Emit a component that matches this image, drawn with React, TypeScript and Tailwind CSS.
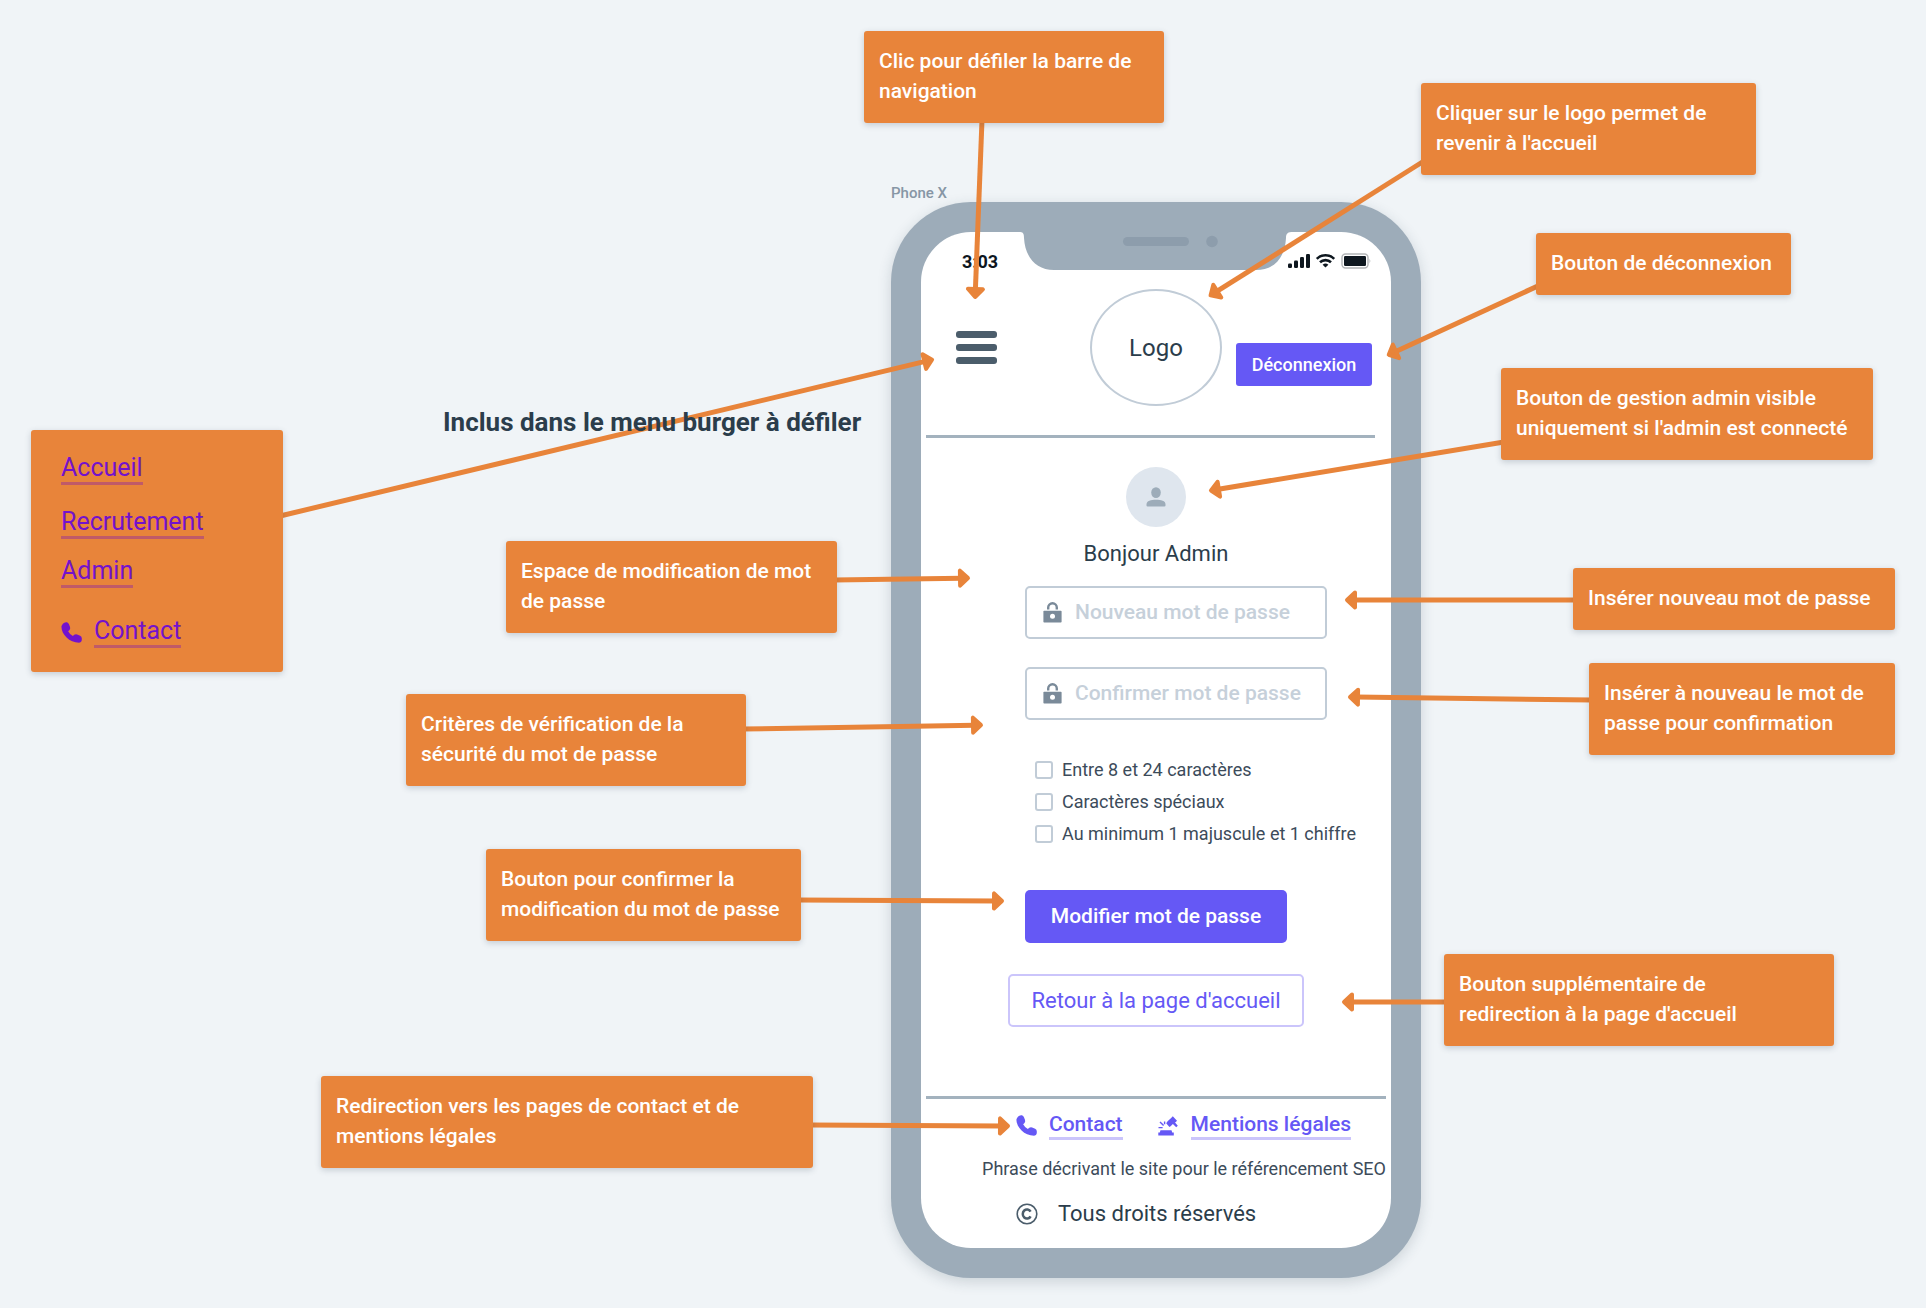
type Point = [number, number];

const notes: { text: string; place: string }[] = [
  { text: "Clic pour défiler la barre de navigation", place: "left-[864px] top-[31px] w-[300px]" },
  { text: "Cliquer sur le logo permet de revenir à l'accueil", place: "left-[1421px] top-[83px] w-[335px]" },
  { text: "Bouton de déconnexion", place: "left-[1536px] top-[233px] w-[255px]" },
  { text: "Bouton de gestion admin visible uniquement si l'admin est connecté", place: "left-[1501px] top-[368px] w-[372px]" },
  { text: "Insérer nouveau mot de passe", place: "left-[1573px] top-[568px] w-[322px]" },
  { text: "Insérer à nouveau le mot de passe pour confirmation", place: "left-[1589px] top-[663px] w-[306px]" },
  { text: "Bouton supplémentaire de\nredirection à la page d'accueil", place: "left-[1444px] top-[954px] w-[390px]" },
  { text: "Espace de modification de mot de passe", place: "left-[506px] top-[541px] w-[331px]" },
  { text: "Critères de vérification de la sécurité du mot de passe", place: "left-[406px] top-[694px] w-[340px]" },
  { text: "Bouton pour confirmer la modification du mot de passe", place: "left-[486px] top-[849px] w-[315px]" },
  { text: "Redirection vers les pages de contact et de mentions légales", place: "left-[321px] top-[1076px] w-[492px]" },
];

const arrows: { from: Point; to: Point }[] = [
  { from: [982, 120], to: [975, 300] },
  { from: [1424, 161], to: [1208, 297] },
  { from: [1540, 285], to: [1386, 356] },
  { from: [1504, 442], to: [1208, 491] },
  { from: [1576, 600], to: [1344, 600] },
  { from: [1592, 700], to: [1347, 697] },
  { from: [1448, 1002], to: [1341, 1002] },
  { from: [834, 580], to: [971, 578] },
  { from: [742, 729], to: [984, 725] },
  { from: [798, 900], to: [1005, 901] },
  { from: [810, 1125], to: [1011, 1126] },
  { from: [280, 516], to: [935, 359] },
];

function Arrow({ from, to }: { from: Point; to: Point }) {
  const dx = to[0] - from[0];
  const dy = to[1] - from[1];
  const length = Math.hypot(dx, dy);
  const angle = (Math.atan2(dy, dx) * 180) / Math.PI;
  return (
    <g transform={`translate(${to[0]} ${to[1]}) rotate(${angle})`}>
      <line x1={-length} y1="0" x2="-9" y2="0" strokeWidth="5" />
      <path d="M-3 0L-11 -7.5V7.5Z" fill="#e8843a" strokeWidth="4" strokeLinejoin="round" />
    </g>
  );
}

function Note({ text, place }: { text: string; place: string }) {
  return (
    <p
      className={`absolute rounded-[3px] bg-[#e8843a] px-[15px] pt-[15px] pb-[17px] text-[21px] leading-[30px] font-medium whitespace-pre-line text-white shadow-[0_2px_6px_rgba(40,60,80,0.22)] ${place}`}
    >
      {text}
    </p>
  );
}

function CallIcon({ className }: { className: string }) {
  return (
    <svg className={className} width="21" height="21" viewBox="0 0 20 20" fill="currentColor" aria-hidden="true">
      <path d="M1.200 2.600C2 0.800 4 0 5.600 0.300Q7 0.600 7.600 2.200L8.600 4.800Q9.200 6.600 7.900 7.800L6.800 8.800Q8.400 11.800 11.300 13.400L12.600 12.200Q13.800 11.200 15.400 11.800L18.200 13Q19.800 13.800 19.800 15.400V17.400Q19.600 19.600 17.200 19.800C8 19.800 0.400 12 0.400 4.400Q0.500 3.400 1.200 2.600Z" />
    </svg>
  );
}

function MenuLink({ children }: { children: string }) {
  return (
    <a href="#" className="block border-b-[3px] border-[#c05a68] text-[25px] leading-7 text-[#7312cc]">
      {children}
    </a>
  );
}

function MenuCard() {
  return (
    <nav className="absolute top-[430px] left-[31px] flex w-[252px] flex-col items-start rounded-[3px] bg-[#e8843a] px-[30px] py-6 shadow-[0_2px_6px_rgba(40,60,80,0.22)]">
      <MenuLink>Accueil</MenuLink>
      <div className="mt-[23px]">
        <MenuLink>Recrutement</MenuLink>
      </div>
      <div className="mt-[18px]">
        <MenuLink>Admin</MenuLink>
      </div>
      <div className="mt-[29px] flex items-center gap-3">
        <CallIcon className="text-[#7312cc]" />
        <MenuLink>Contact</MenuLink>
      </div>
    </nav>
  );
}

function Notch() {
  return (
    <svg className="absolute -top-px left-1/2 -translate-x-1/2" width="274" height="40" viewBox="0 0 274 40" aria-hidden="true">
      <path d="M0 0H274V1C269 1 267 2 267 7C266 26 256 39 237 39H35C17 39 6 26 5 7C5 2 4 1 0 1Z" fill="#9dacb9" />
      <rect x="104" y="6" width="66" height="9" rx="4.5" fill="#8d9dac" />
      <circle cx="193" cy="10.500" r="5.800" fill="#8d9dac" />
    </svg>
  );
}

function StatusIcons() {
  return (
    <svg width="84" height="18" viewBox="0 0 84 18" fill="#0e171f" aria-hidden="true">
      <rect x="0" y="10.500" width="4" height="4.500" rx="1.200" />
      <rect x="6" y="7.500" width="4" height="7.500" rx="1.200" />
      <rect x="12" y="4" width="4" height="11" rx="1.200" />
      <rect x="18" y="1" width="4" height="14" rx="1.200" />
      <g fill="none" stroke="#0e171f" strokeWidth="2.600">
        <path d="M28.800 5.800C33.500 1 41.500 1 46.200 5.800" />
        <path d="M32 9.300C35 6.400 40 6.400 43 9.300" />
      </g>
      <path d="M34.600 11.700Q37.500 9.500 40.400 11.700L37.500 14.600Z" />
      <rect x="54" y="1" width="26" height="14" rx="3.500" fill="none" stroke="#b3b5b7" strokeWidth="1.400" />
      <rect x="56" y="3" width="22" height="10" rx="1.200" />
      <path d="M81.500 5.500Q83.300 8 81.500 10.500Z" fill="#b3b5b7" />
    </svg>
  );
}

function PersonIcon() {
  return (
    <svg width="20" height="20" viewBox="0 0 20 20" fill="#9dacb9" aria-hidden="true">
      <ellipse cx="10" cy="5.600" rx="4.800" ry="5.400" />
      <path d="M0.500 17.500C0.500 13.500 5 12.700 10 12.700S19.500 13.500 19.500 17.500V18.500Q19.500 19.600 18.400 19.600H1.600Q0.500 19.600 0.500 18.500Z" />
    </svg>
  );
}

function LockIcon() {
  return (
    <svg className="shrink-0" width="19" height="21" viewBox="0 0 19 21" aria-hidden="true">
      <path d="M5.200 7.500V5.600A4.300 4.400 0 0 1 13.800 5.600V7.500" fill="none" stroke="#7a8a99" strokeWidth="2.400" />
      <path d="M1.200 8.800H17.800Q18.600 8.800 18.600 9.600V19.800Q18.600 20.600 17.800 20.600H1.200Q0.400 20.600 0.400 19.800V9.600Q0.400 8.800 1.200 8.800Z" fill="#7a8a99" />
      <circle cx="9.500" cy="14.200" r="2.500" fill="#fff" />
    </svg>
  );
}

function GavelIcon() {
  return (
    <svg width="20" height="20" viewBox="0 0 20 20" fill="#6558f5" aria-hidden="true">
      <path d="M2.500 14.200H13.500L14.200 16.600H15.800V19.600H0.300V16.600H1.800Z" />
      <path d="M0.500 11.600H4.600M2 6L5.600 9.600M6.600 5.600V8.200" stroke="#6558f5" strokeWidth="1.400" fill="none" />
      <path d="M8.200 7.200L9.600 5.200L13.400 1.800L14.800 0.300L19 4.800L17.600 6.200L16.800 6.200L19.800 9.800L18.200 11.200L14.900 8L12.600 10.200L11.400 11Z" />
    </svg>
  );
}

function CopyrightIcon() {
  return (
    <svg width="22" height="22" viewBox="0 0 22 22" fill="none" stroke="#4b5d6b" aria-hidden="true">
      <circle cx="11" cy="11" r="9.800" strokeWidth="1.600" />
      <path d="M14.600 8.700A4.200 4.600 0 1 0 14.600 13.300" strokeWidth="2.500" />
    </svg>
  );
}

function PasswordField({ label }: { label: string }) {
  return (
    <label className="flex h-[53px] w-[302px] items-center gap-[13px] rounded-[5px] border-2 border-[#c1ccd7] px-4">
      <LockIcon />
      <input
        type="password"
        aria-label={label}
        placeholder={label}
        className="min-w-0 flex-1 bg-transparent text-[21px] font-medium text-[#2b3d4b] outline-none placeholder:text-[#c6d0da]"
      />
    </label>
  );
}

function Criterion({ label }: { label: string }) {
  return (
    <label className="flex h-8 items-center gap-[9px] text-lg whitespace-nowrap text-[#3c4b5a]">
      <input type="checkbox" className="size-[18px] appearance-none rounded-[3px] border-2 border-[#c1ccd7] bg-white checked:bg-[#6558f5]" />
      {label}
    </label>
  );
}

function FooterLink({ children }: { children: string }) {
  return (
    <a href="#" className="border-b-[3px] border-[#cbc5fb] text-[21px] leading-[26px] text-[#6558f5]">
      {children}
    </a>
  );
}

function Phone() {
  return (
    <section
      aria-label="Phone X"
      className="absolute top-[202px] left-[891px] w-[530px] rounded-[80px] bg-[#9dacb9] p-[30px] shadow-[0_4px_14px_rgba(40,60,80,0.18)]"
    >
      <div className="relative flex flex-col overflow-hidden rounded-[50px] bg-white pb-[19px]">
        <Notch />
        <div className="flex items-center justify-between pt-4 pr-[19px] pl-[41px] leading-7">
          <span className="text-lg leading-[27px] font-bold text-[#0e171f]">3:03</span>
          <StatusIcons />
        </div>

        <header className="mt-[14px] grid grid-cols-[1fr_auto_1fr] items-center pr-[19px] pl-[35px]">
          <button type="button" aria-label="Menu" className="flex w-[41px] flex-col gap-[6px]">
            <span className="h-[7px] rounded-[3px] bg-[#4b5d6b]" />
            <span className="h-[7px] rounded-[3px] bg-[#4b5d6b]" />
            <span className="h-[7px] rounded-[3px] bg-[#4b5d6b]" />
          </button>
          <a
            href="#"
            className="-ml-4 flex h-[117px] w-[132px] items-center justify-center rounded-[50%] border-2 border-[#c1ccd7] text-2xl text-[#2b3d4b]"
          >
            Logo
          </a>
          <button type="button" className="mb-5 h-[43px] w-[136px] self-end justify-self-end rounded-[3px] bg-[#6558f5] text-lg font-medium text-white">
            Déconnexion
          </button>
        </header>

        <hr className="mt-[29px] mr-4 ml-[5px] border-t-[3px] border-[#a3b2be]" />

        <main className="flex flex-col">
          <div className="mt-[29px] flex size-[60px] items-center justify-center self-center rounded-full bg-[#dfe6ee]">
            <PersonIcon />
          </div>
          <h1 className="mt-3 self-center text-[22px] leading-[30px] text-[#2b3d4b]">Bonjour Admin</h1>

          <form className="mt-[17px] flex flex-col items-start pl-[104px]">
            <PasswordField label="Nouveau mot de passe" />
            <div className="mt-7">
              <PasswordField label="Confirmer mot de passe" />
            </div>
            <div className="mt-[34px] pl-[10px]">
              <Criterion label="Entre 8 et 24 caractères" />
              <Criterion label="Caractères spéciaux" />
              <Criterion label="Au minimum 1 majuscule et 1 chiffre" />
            </div>
            <button type="button" className="mt-10 h-[53px] w-[262px] rounded-[5px] bg-[#6558f5] text-[21px] font-medium text-white">
              Modifier mot de passe
            </button>
          </form>
          <button
            type="button"
            className="mt-[31px] h-[53px] w-[296px] self-center rounded-[5px] border-2 border-[#cbc5fb] bg-white text-[22px] text-[#6558f5]"
          >
            Retour à la page d'accueil
          </button>
        </main>

        <hr className="mt-[69px] mr-[5px] ml-[5px] border-t-[3px] border-[#a3b2be]" />

        <footer className="flex flex-col pr-[5px]">
          <div className="mt-3 flex items-center gap-3 pl-[95px] font-medium">
            <CallIcon className="text-[#6558f5]" />
            <FooterLink>Contact</FooterLink>
            <div className="ml-[23px] flex items-center gap-[13px]">
              <GavelIcon />
              <FooterLink>Mentions légales</FooterLink>
            </div>
          </div>
          <p className="mt-[18px] self-end text-lg leading-[22px] whitespace-nowrap text-[#3c4b5a]">
            Phrase décrivant le site pour le référencement SEO
          </p>
          <p className="mt-[19px] flex items-center gap-5 pl-[95px] text-[22px] leading-[30px] text-[#2b3d4b]">
            <CopyrightIcon />
            Tous droits réservés
          </p>
        </footer>
      </div>
    </section>
  );
}

export default function App() {
  return (
    <div className="relative min-h-screen w-full overflow-hidden bg-[#f0f4f7] font-['Roboto',sans-serif]">
      <span className="absolute top-[183px] left-[891px] text-[15px] leading-5 font-medium text-[#8796a5]">Phone X</span>
      <Phone />
      <svg className="pointer-events-none absolute inset-0 size-full" stroke="#e8843a" aria-hidden="true">
        {arrows.map((arrow) => (
          <Arrow key={arrow.from.join()} {...arrow} />
        ))}
      </svg>
      <MenuCard />
      <h2 className="absolute top-[405px] left-[443px] text-[26px] leading-[34px] font-bold whitespace-nowrap text-[#2b3d4b]">
        Inclus dans le menu burger à défiler
      </h2>
      {notes.map((note) => (
        <Note key={note.text} {...note} />
      ))}
    </div>
  );
}
